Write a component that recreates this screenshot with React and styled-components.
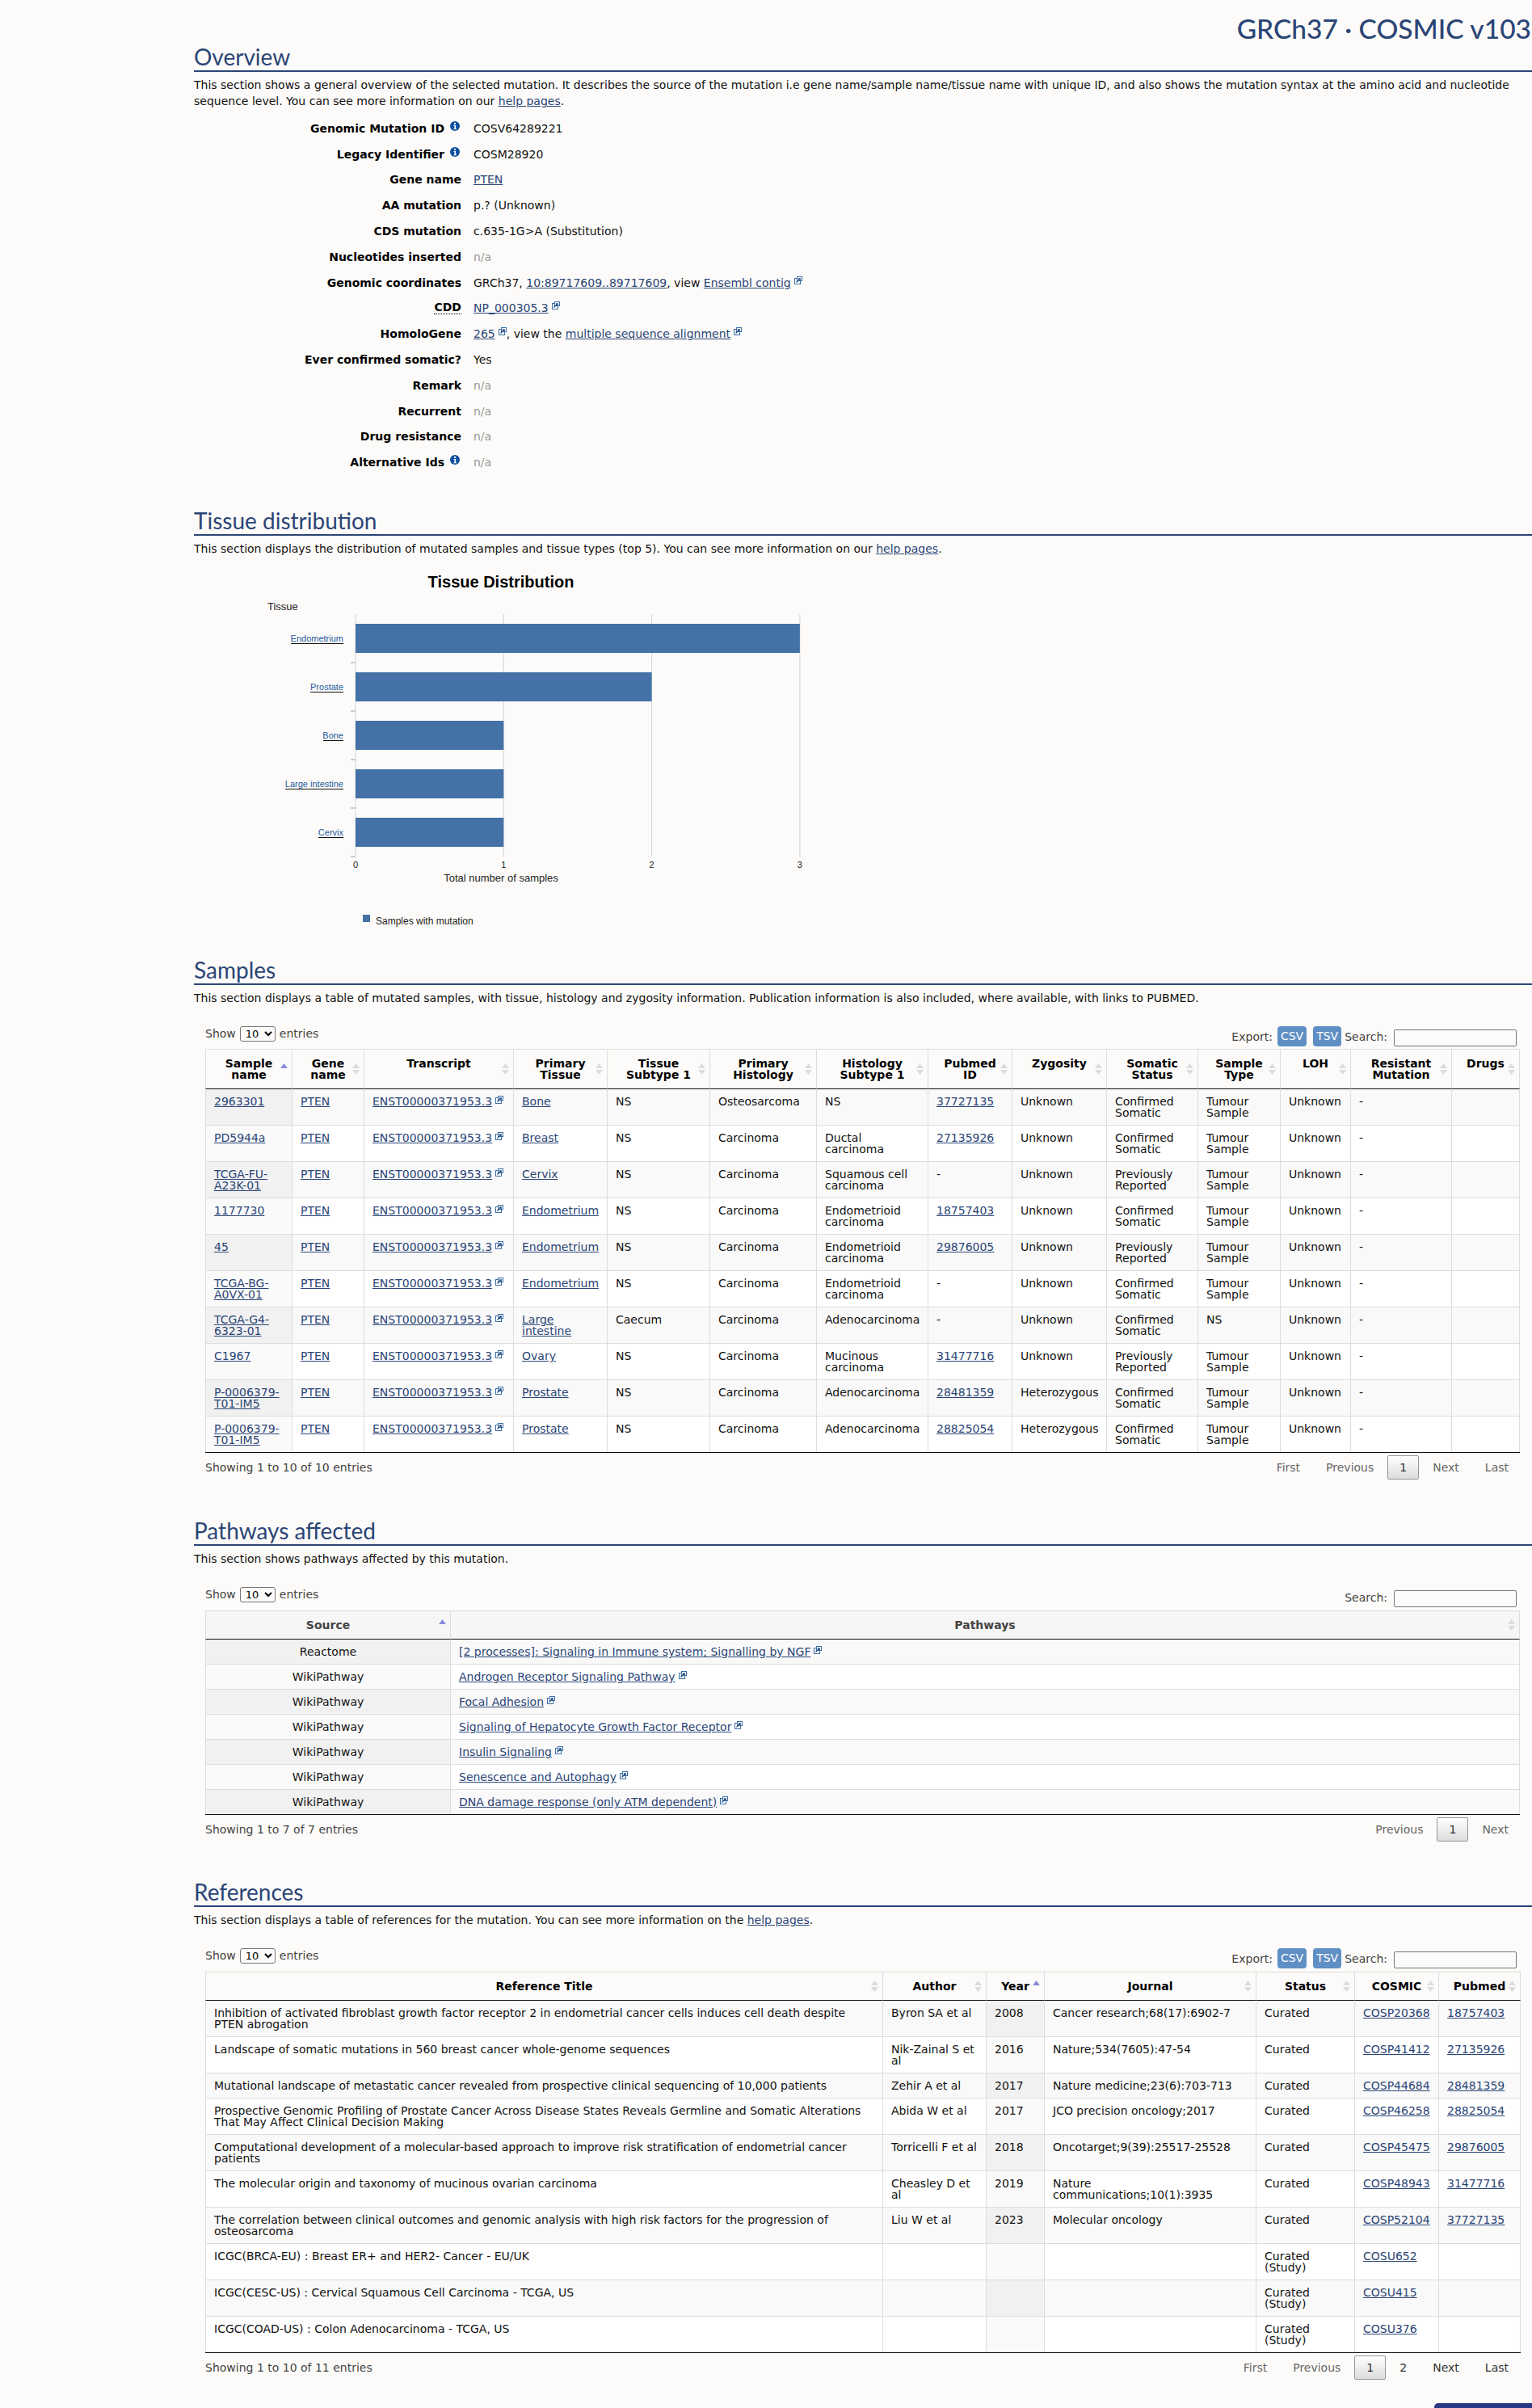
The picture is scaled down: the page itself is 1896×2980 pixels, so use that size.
import React from "react";
import styled, { createGlobalStyle } from "styled-components";

const GlobalStyle = createGlobalStyle`
  html, body {
    margin: 0;
    padding: 0;
    background: #fcfbf9;
    overflow: hidden;
  }
  body {
    font-family: "DejaVu Sans", Verdana, sans-serif;
    font-size: 14px;
    color: #111;
  }
`;

const Page = styled.div`
  width: 1656px;
  margin-left: 240px;
`;

const SiteTitle = styled.div`
  height: 36px;
  padding: 17px 1px 0 0;
  line-height: 36px;
  text-align: right;
  font-family: Lato, sans-serif;
  font-size: 33.5px;
  font-weight: 500;
  color: #2b4576;
  white-space: nowrap;
`;

const Section = styled.section`
  margin-top: ${(props) => props.$top || 0}px;
`;

const Heading = styled.h2`
  margin: 0;
  height: 34px;
  line-height: 34px;
  font-family: Lato, sans-serif;
  font-size: 28px;
  font-weight: 400;
  color: #2b4576;
  border-bottom: 2px solid #2b4576;
`;

const Intro = styled.p`
  margin: 6px 0 0;
  line-height: 20px;
`;

const Link = styled.a`
  color: #2b4576;
  text-decoration: underline;
`;

const Details = styled.div`
  margin-top: 8px;
`;

const DetailRow = styled.div`
  display: grid;
  grid-template-columns: 331px 1fr;
  column-gap: 15px;
  height: 31.8px;
  align-items: center;
`;

const Label = styled.div`
  display: flex;
  justify-content: flex-end;
  align-items: center;
  font-weight: 700;
  color: #000;
`;

const Abbr = styled.span`
  border-bottom: 1px dotted #000;
  line-height: 15px;
`;

const Value = styled.div`
  color: ${(props) => (props.$muted ? "#999" : "#111")};
`;

const InfoSvg = styled.svg`
  width: 12px;
  height: 12px;
  margin: -6px 2px 0 7px;
`;

const ExtSvg = styled.svg`
  width: 10px;
  height: 10px;
  margin-left: 4px;
  vertical-align: top;
`;

const InfoIcon = () => (
  <InfoSvg viewBox="0 0 12 12">
    <circle cx="6" cy="6" r="6" fill="#0b4f9e" />
    <circle cx="6" cy="2.9" r="1.2" fill="#fff" />
    <path d="M4.4 5h2.7v4.2h1v1H4.4v-1h1V6h-1z" fill="#fff" />
  </InfoSvg>
);

const ExtIcon = () => (
  <ExtSvg viewBox="0 0 10 10">
    <rect x="0.5" y="2.5" width="7" height="7" fill="#fff" stroke="#3a6ea5" />
    <rect x="3.5" y="0.5" width="6" height="5" fill="#fff" stroke="#3a6ea5" />
    <path d="M2.5 7.5L6.5 3.5M4.8 2.8h2.4v2.4" fill="none" stroke="#234a7c" strokeWidth="1.2" />
  </ExtSvg>
);

const ExtLink = ({ children }) => (
  <>
    <Link href="#">{children}</Link>
    <ExtIcon />
  </>
);

const ChartSvg = styled.svg`
  display: block;
  width: 800px;
  height: 470px;
  margin-top: 1px;
`;

const tissues = [
  { name: "Endometrium", count: 3, line: 65 },
  { name: "Prostate", count: 2, line: 41 },
  { name: "Bone", count: 1, line: 25 },
  { name: "Large intestine", count: 1, line: 72 },
  { name: "Cervix", count: 1, line: 31 },
];

const TissueChart = () => {
  const x0 = 440;
  const step = 183.3;
  const arial = "Liberation Sans, Arial, sans-serif";
  return (
    <ChartSvg viewBox="240 690 800 470" fontFamily={arial}>
      <text x="620" y="727" fontSize="20" fontWeight="700" textAnchor="middle" fill="#000">
        Tissue Distribution
      </text>
      <text x="331" y="755" fontSize="13" fill="#222">
        Tissue
      </text>
      {[0, 1, 2, 3].map((n) => (
        <g key={n}>
          <line x1={x0 + n * step} x2={x0 + n * step} y1="760" y2="1060" stroke="#d4d4d4" />
          <text x={x0 + n * step} y="1074" fontSize="11" textAnchor="middle" fill="#222">
            {n}
          </text>
        </g>
      ))}
      {tissues.map((t, i) => (
        <g key={t.name}>
          <rect x={x0} y={772 + i * 60} width={t.count * step} height="36" fill="#4472a6" />
          <line x1="434" x2="440" y1={820 + i * 60} y2={820 + i * 60} stroke="#ccc" strokeWidth="2" />
          <text x="425" y={794 + i * 60} fontSize="11" textAnchor="end" fill="#1d5a9c">
            {t.name}
          </text>
          <line x1={425 - t.line} x2="425" y1={796.5 + i * 60} y2={796.5 + i * 60} stroke="#111" />
        </g>
      ))}
      <text x="620" y="1091" fontSize="13" textAnchor="middle" fill="#222">
        Total number of samples
      </text>
      <rect x="449" y="1132" width="9" height="9" fill="#4472a6" />
      <text x="465" y="1144" fontSize="12" fill="#222">
        Samples with mutation
      </text>
    </ChartSvg>
  );
};

const TableBlock = styled.div`
  margin: 0 14px;
`;

const Toolbar = styled.div`
  display: flex;
  justify-content: space-between;
  height: ${(props) => props.$height}px;
  margin-top: ${(props) => props.$top}px;
  color: #444;
`;

const LengthControl = styled.label`
  display: flex;
  align-items: center;
  gap: 5px;
  height: 22px;
`;

const LengthSelect = styled.select`
  width: 44px;
  height: 19px;
  padding: 0 2px;
  font-family: "DejaVu Sans", sans-serif;
  font-size: 13px;
  background: #fcfbf9;
  border: 1px solid #767676;
  border-radius: 3px;
`;

const Tools = styled.div`
  display: flex;
  align-items: center;
  height: 25px;
  margin-top: 2px;
  margin-right: 5px;
`;

const ExportButton = styled.span`
  display: inline-block;
  height: 25px;
  line-height: 25px;
  padding: 0 4px;
  margin-left: ${(props) => props.$gap}px;
  background: #5f8fc4;
  border-radius: 4px;
  color: #fff;
`;

const SearchLabel = styled.span`
  margin-left: 4px;
`;

const SearchInput = styled.input`
  width: 152px;
  height: 21px;
  box-sizing: border-box;
  margin: 4px 0 0 8px;
  background: transparent;
  border: 1px solid #767676;
  border-radius: 2px;
`;

const Table = styled.table`
  table-layout: fixed;
  width: ${(props) => props.$width}px;
  border-collapse: separate;
  border-spacing: 0;
  line-height: 14px;
  border-bottom: 1px solid #111;
`;

const Col = styled.col`
  width: ${(props) => props.$width}px;
`;

const HeadCell = styled.th`
  position: relative;
  padding: 10px;
  font-weight: 700;
  vertical-align: top;
  text-align: center;
  color: ${(props) => (props.$shaded ? "#444" : "#000")};
  background: ${(props) => (props.$shaded ? "#f6f6f6" : "transparent")};
  border-top: 1px solid #ddd;
  border-right: 1px solid #ddd;
  border-bottom: 1px solid #111;
  &:first-child {
    border-left: 1px solid #ddd;
  }
`;

const SortSvg = styled.svg`
  position: absolute;
  right: 5px;
  top: 50%;
  width: 9px;
  height: 16px;
  margin-top: -8px;
`;

const SortIcon = ({ active }) => (
  <SortSvg viewBox="0 0 9 16">
    <path d="M4.5 1L9 7H0z" fill={active ? "#8a8ade" : "#dcdcdc"} />
    {!active && <path d="M4.5 15L0 9H9z" fill="#dcdcdc" />}
  </SortSvg>
);

const Row = styled.tr`
  background: ${(props) => (props.$odd ? "#f9f9f9" : "#fff")};
`;

const Cell = styled.td`
  padding: 8px 10px;
  vertical-align: top;
  text-align: ${(props) => (props.$center ? "center" : "left")};
  background: ${(props) => (props.$sorted ? (props.$odd ? "#f1f1f1" : "#fafafa") : "transparent")};
  border-top: 1px solid #ddd;
  border-right: 1px solid #ddd;
  &:first-child {
    border-left: 1px solid #ddd;
  }
  tr:first-child > & {
    border-top: none;
  }
`;

const Footer = styled.div`
  display: flex;
  justify-content: space-between;
  align-items: center;
  margin-top: 3px;
  color: #444;
`;

const Pager = styled.div`
  display: flex;
`;

const PageButton = styled.span`
  box-sizing: border-box;
  height: 30px;
  line-height: 14px;
  padding: 7px 14px;
  margin-left: 2px;
  border: 1px solid ${(props) => (props.$current ? "#979797" : "transparent")};
  border-radius: 2px;
  color: ${(props) => (props.$off ? "#666" : "#333")};
  background: ${(props) =>
    props.$current ? "linear-gradient(to bottom, #fff 0%, #dcdcdc 100%)" : "transparent"};
`;

const BackToTop = styled.div`
  position: fixed;
  right: 0;
  bottom: 0;
  width: 121px;
  height: 6px;
  background: #2a3784;
  border-radius: 5px 0 0 0;
`;

function DataTable({ columns, rows, top, toolbarHeight = 31, showExport, pages, info, shaded, centerFirst }) {
  const total = columns.reduce((sum, c) => sum + c.width, 0);
  return (
    <TableBlock>
      <Toolbar $top={top} $height={toolbarHeight}>
        <LengthControl>
          Show
          <LengthSelect defaultValue="10">
            <option value="10">10</option>
          </LengthSelect>
          entries
        </LengthControl>
        <Tools>
          {showExport && (
            <>
              Export:
              <ExportButton $gap={6}>CSV</ExportButton>
              <ExportButton $gap={8}>TSV</ExportButton>
            </>
          )}
          <SearchLabel>Search:</SearchLabel>
          <SearchInput type="text" />
        </Tools>
      </Toolbar>
      <Table $width={total}>
        <colgroup>
          {columns.map((c) => (
            <Col key={c.title} $width={c.width} />
          ))}
        </colgroup>
        <thead>
          <tr>
            {columns.map((c) => (
              <HeadCell key={c.title} $shaded={shaded}>
                {c.title}
                <SortIcon active={c.sorted} />
              </HeadCell>
            ))}
          </tr>
        </thead>
        <tbody>
          {rows.map((row, r) => (
            <Row key={r} $odd={r % 2 === 0}>
              {row.map((value, c) => (
                <Cell
                  key={c}
                  $odd={r % 2 === 0}
                  $sorted={columns[c].sorted}
                  $center={centerFirst && c === 0}
                >
                  {value}
                </Cell>
              ))}
            </Row>
          ))}
        </tbody>
      </Table>
      <Footer>
        <span>{info}</span>
        <Pager>
          {pages.map((p) => (
            <PageButton key={p.label} $current={p.current} $off={p.off}>
              {p.label}
            </PageButton>
          ))}
        </Pager>
      </Footer>
    </TableBlock>
  );
}

const sampleColumns = [
  { title: "Sample name", width: 108, sorted: true },
  { title: "Gene name", width: 89 },
  { title: "Transcript", width: 185 },
  { title: "Primary Tissue", width: 116 },
  { title: "Tissue Subtype 1", width: 127 },
  { title: "Primary Histology", width: 132 },
  { title: "Histology Subtype 1", width: 138 },
  { title: "Pubmed ID", width: 104 },
  { title: "Zygosity", width: 117 },
  { title: "Somatic Status", width: 113 },
  { title: "Sample Type", width: 102 },
  { title: "LOH", width: 87 },
  { title: "Resistant Mutation", width: 125 },
  { title: "Drugs", width: 84 },
];

const sampleData = [
  ["2963301", "Bone", "NS", "Osteosarcoma", "NS", "37727135", "Unknown", "Confirmed Somatic", "Tumour Sample"],
  ["PD5944a", "Breast", "NS", "Carcinoma", "Ductal carcinoma", "27135926", "Unknown", "Confirmed Somatic", "Tumour Sample"],
  ["TCGA-FU-A23K-01", "Cervix", "NS", "Carcinoma", "Squamous cell carcinoma", "-", "Unknown", "Previously Reported", "Tumour Sample"],
  ["1177730", "Endometrium", "NS", "Carcinoma", "Endometrioid carcinoma", "18757403", "Unknown", "Confirmed Somatic", "Tumour Sample"],
  ["45", "Endometrium", "NS", "Carcinoma", "Endometrioid carcinoma", "29876005", "Unknown", "Previously Reported", "Tumour Sample"],
  ["TCGA-BG-A0VX-01", "Endometrium", "NS", "Carcinoma", "Endometrioid carcinoma", "-", "Unknown", "Confirmed Somatic", "Tumour Sample"],
  ["TCGA-G4-6323-01", "Large intestine", "Caecum", "Carcinoma", "Adenocarcinoma", "-", "Unknown", "Confirmed Somatic", "NS"],
  ["C1967", "Ovary", "NS", "Carcinoma", "Mucinous carcinoma", "31477716", "Unknown", "Previously Reported", "Tumour Sample"],
  ["P-0006379-T01-IM5", "Prostate", "NS", "Carcinoma", "Adenocarcinoma", "28481359", "Heterozygous", "Confirmed Somatic", "Tumour Sample"],
  ["P-0006379-T01-IM5", "Prostate", "NS", "Carcinoma", "Adenocarcinoma", "28825054", "Heterozygous", "Confirmed Somatic", "Tumour Sample"],
];

const sampleRows = sampleData.map((s) => [
  <Link href="#">{s[0]}</Link>,
  <Link href="#">PTEN</Link>,
  <ExtLink>ENST00000371953.3</ExtLink>,
  <Link href="#">{s[1]}</Link>,
  s[2],
  s[3],
  s[4],
  s[5] === "-" ? "-" : <Link href="#">{s[5]}</Link>,
  s[6],
  s[7],
  s[8],
  "Unknown",
  "-",
  "",
]);

const pathwayColumns = [
  { title: "Source", width: 304, sorted: true },
  { title: "Pathways", width: 1323 },
];

const pathwayRows = [
  ["Reactome", "[2 processes]: Signaling in Immune system; Signalling by NGF"],
  ["WikiPathway", "Androgen Receptor Signaling Pathway"],
  ["WikiPathway", "Focal Adhesion"],
  ["WikiPathway", "Signaling of Hepatocyte Growth Factor Receptor"],
  ["WikiPathway", "Insulin Signaling"],
  ["WikiPathway", "Senescence and Autophagy"],
  ["WikiPathway", "DNA damage response (only ATM dependent)"],
].map(([source, name]) => [source, <ExtLink>{name}</ExtLink>]);

const referenceColumns = [
  { title: "Reference Title", width: 839 },
  { title: "Author", width: 128 },
  { title: "Year", width: 72, sorted: true },
  { title: "Journal", width: 262 },
  { title: "Status", width: 122 },
  { title: "COSMIC", width: 104 },
  { title: "Pubmed", width: 101 },
];

const referenceData = [
  ["Inhibition of activated fibroblast growth factor receptor 2 in endometrial cancer cells induces cell death despite PTEN abrogation", "Byron SA et al", "2008", "Cancer research;68(17):6902-7", "Curated", "COSP20368", "18757403"],
  ["Landscape of somatic mutations in 560 breast cancer whole-genome sequences", "Nik-Zainal S et al", "2016", "Nature;534(7605):47-54", "Curated", "COSP41412", "27135926"],
  ["Mutational landscape of metastatic cancer revealed from prospective clinical sequencing of 10,000 patients", "Zehir A et al", "2017", "Nature medicine;23(6):703-713", "Curated", "COSP44684", "28481359"],
  ["Prospective Genomic Profiling of Prostate Cancer Across Disease States Reveals Germline and Somatic Alterations That May Affect Clinical Decision Making", "Abida W et al", "2017", "JCO precision oncology;2017", "Curated", "COSP46258", "28825054"],
  ["Computational development of a molecular-based approach to improve risk stratification of endometrial cancer patients", "Torricelli F et al", "2018", "Oncotarget;9(39):25517-25528", "Curated", "COSP45475", "29876005"],
  ["The molecular origin and taxonomy of mucinous ovarian carcinoma", "Cheasley D et al", "2019", "Nature communications;10(1):3935", "Curated", "COSP48943", "31477716"],
  ["The correlation between clinical outcomes and genomic analysis with high risk factors for the progression of osteosarcoma", "Liu W et al", "2023", "Molecular oncology", "Curated", "COSP52104", "37727135"],
  ["ICGC(BRCA-EU) : Breast ER+ and HER2- Cancer - EU/UK", "", "", "", "Curated (Study)", "COSU652", ""],
  ["ICGC(CESC-US) : Cervical Squamous Cell Carcinoma - TCGA, US", "", "", "", "Curated (Study)", "COSU415", ""],
  ["ICGC(COAD-US) : Colon Adenocarcinoma - TCGA, US", "", "", "", "Curated (Study)", "COSU376", ""],
];

const referenceRows = referenceData.map((r) => [
  r[0],
  r[1],
  r[2],
  r[3],
  r[4],
  <Link href="#">{r[5]}</Link>,
  r[6] ? <Link href="#">{r[6]}</Link> : "",
]);

const page = (label, extra) => ({ label, ...extra });

export default function App() {
  return (
    <Page>
      <GlobalStyle />
      <SiteTitle>GRCh37 · COSMIC v103</SiteTitle>

      <Section>
        <Heading>Overview</Heading>
        <Intro>
          This section shows a general overview of the selected mutation. It describes the source of
          the mutation i.e gene name/sample name/tissue name with unique ID, and also shows the
          mutation syntax at the amino acid and nucleotide sequence level. You can see more
          information on our <Link href="#">help pages</Link>.
        </Intro>
        <Details>
          <DetailRow>
            <Label>
              Genomic Mutation ID
              <InfoIcon />
            </Label>
            <Value>COSV64289221</Value>
          </DetailRow>
          <DetailRow>
            <Label>
              Legacy Identifier
              <InfoIcon />
            </Label>
            <Value>COSM28920</Value>
          </DetailRow>
          <DetailRow>
            <Label>Gene name</Label>
            <Value>
              <Link href="#">PTEN</Link>
            </Value>
          </DetailRow>
          <DetailRow>
            <Label>AA mutation</Label>
            <Value>p.? (Unknown)</Value>
          </DetailRow>
          <DetailRow>
            <Label>CDS mutation</Label>
            <Value>c.635-1G&gt;A (Substitution)</Value>
          </DetailRow>
          <DetailRow>
            <Label>Nucleotides inserted</Label>
            <Value $muted>n/a</Value>
          </DetailRow>
          <DetailRow>
            <Label>Genomic coordinates</Label>
            <Value>
              GRCh37, <Link href="#">10:89717609..89717609</Link>, view{" "}
              <ExtLink>Ensembl contig</ExtLink>
            </Value>
          </DetailRow>
          <DetailRow>
            <Label>
              <Abbr>CDD</Abbr>
            </Label>
            <Value>
              <ExtLink>NP_000305.3</ExtLink>
            </Value>
          </DetailRow>
          <DetailRow>
            <Label>HomoloGene</Label>
            <Value>
              <ExtLink>265</ExtLink>, view the <ExtLink>multiple sequence alignment</ExtLink>
            </Value>
          </DetailRow>
          <DetailRow>
            <Label>Ever confirmed somatic?</Label>
            <Value>Yes</Value>
          </DetailRow>
          <DetailRow>
            <Label>Remark</Label>
            <Value $muted>n/a</Value>
          </DetailRow>
          <DetailRow>
            <Label>Recurrent</Label>
            <Value $muted>n/a</Value>
          </DetailRow>
          <DetailRow>
            <Label>Drug resistance</Label>
            <Value $muted>n/a</Value>
          </DetailRow>
          <DetailRow>
            <Label>
              Alternative Ids
              <InfoIcon />
            </Label>
            <Value $muted>n/a</Value>
          </DetailRow>
        </Details>
      </Section>

      <Section $top={39}>
        <Heading>Tissue distribution</Heading>
        <Intro>
          This section displays the distribution of mutated samples and tissue types (top 5). You
          can see more information on our <Link href="#">help pages</Link>.
        </Intro>
        <TissueChart />
      </Section>

      <Section $top={23}>
        <Heading>Samples</Heading>
        <Intro>
          This section displays a table of mutated samples, with tissue, histology and zygosity
          information. Publication information is also included, where available, with links to
          PUBMED.
        </Intro>
        <DataTable
          top={23}
          toolbarHeight={30}
          showExport
          columns={sampleColumns}
          rows={sampleRows}
          info="Showing 1 to 10 of 10 entries"
          pages={[
            page("First", { off: true }),
            page("Previous", { off: true }),
            page("1", { current: true }),
            page("Next", { off: true }),
            page("Last", { off: true }),
          ]}
        />
      </Section>

      <Section $top={46}>
        <Heading>Pathways affected</Heading>
        <Intro>This section shows pathways affected by this mutation.</Intro>
        <DataTable
          top={23}
          shaded
          centerFirst
          columns={pathwayColumns}
          rows={pathwayRows}
          info="Showing 1 to 7 of 7 entries"
          pages={[
            page("Previous", { off: true }),
            page("1", { current: true }),
            page("Next", { off: true }),
          ]}
        />
      </Section>

      <Section $top={45}>
        <Heading>References</Heading>
        <Intro>
          This section displays a table of references for the mutation. You can see more information
          on the <Link href="#">help pages</Link>.
        </Intro>
        <DataTable
          top={23}
          showExport
          columns={referenceColumns}
          rows={referenceRows}
          info="Showing 1 to 10 of 11 entries"
          pages={[
            page("First", { off: true }),
            page("Previous", { off: true }),
            page("1", { current: true }),
            page("2"),
            page("Next"),
            page("Last"),
          ]}
        />
      </Section>
      <BackToTop />
    </Page>
  );
}
